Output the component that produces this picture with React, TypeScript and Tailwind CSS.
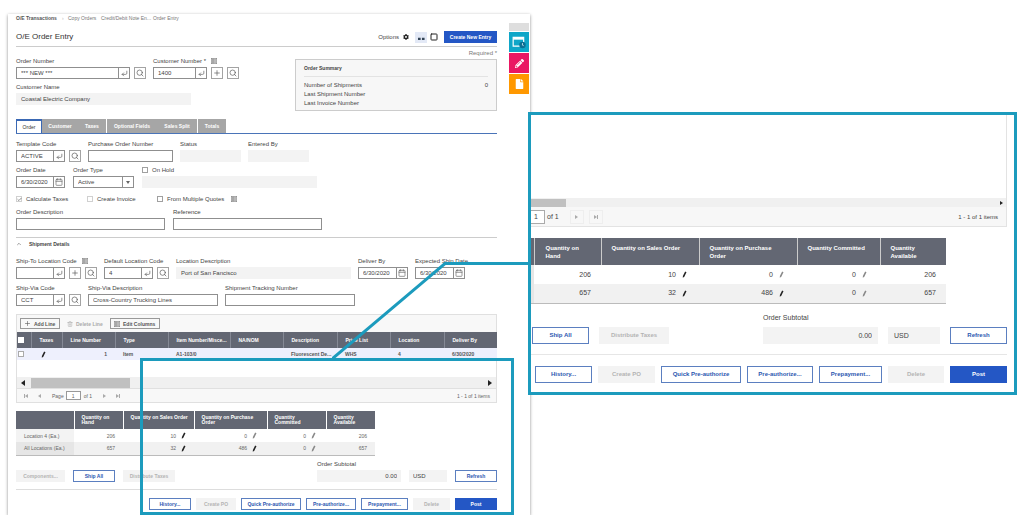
import React, { useId } from "react";
import clsx from "clsx";
import {
  Calendar,
  Check,
  ChevronUp,
  CornerDownLeft,
  Plus,
  Search,
  Square,
  Trash2,
} from "lucide-react";
import { FaCog, FaPencilAlt, FaFile } from "react-icons/fa";

const ListIcon = () => (
  <svg viewBox="0 0 12 12" className="w-[6px] h-[6px] shrink-0">
    <rect x="0.5" y="0.5" width="11" height="11" fill="#ddd" stroke="#777" />
    <path d="M2 3.5h8M2 6h8M2 8.5h8M4 1v10" stroke="#777" fill="none" />
  </svg>
);

const EditIcon = ({ faded }: { faded?: boolean }) => (
  <svg viewBox="0 0 10 14" className="w-[5px] h-[7px] shrink-0">
    <path
      d="M6.2 1.2 9 2.6 4.6 11.4 1.6 13.6 1.8 10Z"
      fill={faded ? "#888" : "#222"}
    />
  </svg>
);

const PagerIcon = ({ end, back }: { end?: boolean; back?: boolean }) => (
  <svg viewBox="0 0 6 4" className={clsx("w-[6px] h-[4px]", back && "rotate-180")}>
    <path d="M1 0v4l3-2z" fill="#aaa" />
    {end && <path d="M4.500 0v4" stroke="#aaa" />}
  </svg>
);

const IconButton = ({ label, children }: { label: string; children: React.ReactNode }) => (
  <button
    type="button"
    aria-label={label}
    className="flex items-center justify-center w-[12px] h-[12px] shrink-0 border border-[#a3a3a3] bg-white text-[#555]">
    {children}
  </button>
);

const SearchButton = () => (
  <IconButton label="Search">
    <Search className="w-[8px] h-[8px]" strokeWidth={2} />
  </IconButton>
);

const AddButton = () => (
  <IconButton label="Add">
    <Plus className="w-[8px] h-[8px]" strokeWidth={2} />
  </IconButton>
);

type FieldProps = {
  label: string;
  value?: string;
  width: string;
  disabled?: boolean;
  list?: boolean;
  addon?: "enter" | "date";
  children?: React.ReactNode;
};

const Field = ({ label, value = "", width, disabled, list, addon, children }: FieldProps) => {
  const id = useId();
  return (
    <div className="flex flex-col gap-[2px] shrink-0">
      <div className="flex items-center gap-[5px] h-[8px]">
        <label htmlFor={id} className="whitespace-nowrap">
          {label}
        </label>
        {list && <ListIcon />}
      </div>
      <div className="flex gap-[4px]">
        <div
          className={clsx(
            "flex h-[12px] border",
            width,
            disabled ? "border-[#f3f3f3] bg-[#f3f3f3]" : "border-[#8f8f8f] bg-white"
          )}>
          <input
            id={id}
            type="text"
            defaultValue={value}
            disabled={disabled}
            className="flex-1 min-w-0 h-[10px] pl-[4px] leading-[10px] bg-transparent outline-none"
          />
          {addon && (
            <button
              type="button"
              aria-label={addon === "enter" ? "Go" : "Pick a date"}
              className="flex items-center justify-center w-[11px] shrink-0 border-l border-[#8f8f8f] text-[#666]">
              {addon === "enter" ? (
                <CornerDownLeft className="w-[7px] h-[7px]" strokeWidth={2.5} />
              ) : (
                <Calendar className="w-[8px] h-[8px]" strokeWidth={2} />
              )}
            </button>
          )}
        </div>
        {children}
      </div>
    </div>
  );
};

const Tick = ({ label, checked, muted }: { label: string; checked?: boolean; muted?: boolean }) => (
  <label className="flex items-center gap-[4px] h-[8px] whitespace-nowrap">
    <span className="grid place-items-center">
      <input
        type="checkbox"
        defaultChecked={checked}
        disabled={muted}
        className={clsx(
          "col-start-1 row-start-1 appearance-none w-[6px] h-[6px] border",
          muted ? "border-[#d0d0d0]" : "border-[#a0a0a0]"
        )}
      />
      {checked && (
        <Check className="col-start-1 row-start-1 w-[5px] h-[5px] text-[#777]" strokeWidth={4} />
      )}
    </span>
    {label}
  </label>
);

type ActionProps = {
  children: React.ReactNode;
  kind?: "outline" | "solid" | "off";
  className: string;
};

const Action = ({ children, kind = "outline", className }: ActionProps) => (
  <button
    type="button"
    disabled={kind === "off"}
    className={clsx(
      "flex items-center justify-center shrink-0 border font-bold whitespace-nowrap",
      kind === "outline" && "border-[#5b7fc0] bg-white text-[#2c58b0]",
      kind === "solid" && "border-[#2457c5] bg-[#2457c5] text-white",
      kind === "off" && "border-[#f3f3f3] bg-[#f3f3f3] text-[#b4b4b4]",
      className
    )}>
    {children}
  </button>
);

const GRID_COLUMNS = [
  { title: "Taxes", width: "w-[31px]" },
  { title: "Line Number", width: "w-[53px]" },
  { title: "Type", width: "w-[53px]" },
  { title: "Item Number/Misce...", width: "w-[62px]" },
  { title: "NA/NOM", width: "w-[53px]" },
  { title: "Description", width: "w-[54px]" },
  { title: "Price List", width: "w-[53px]" },
  { title: "Location", width: "w-[54px]" },
  { title: "Deliver By", width: "w-[53px]" },
];

const QUANTITIES = [
  { name: "Location 4 (Ea.)", hand: "206", sales: "10", purchase: "0", committed: "0", available: "206" },
  { name: "All Locations (Ea.)", hand: "657", sales: "32", purchase: "486", committed: "0", available: "657" },
];

const pagerButton = "flex items-center justify-center w-[13px] h-[10px]";

const LineGrid = () => (
  <div className="mt-[8px] border border-[#e0e0e0] bg-white text-[5px]">
    <div className="flex items-center gap-[7px] h-[17px] px-[3px] bg-[#f8f8f8] font-bold text-[#555]">
      <button type="button" className="flex items-center gap-[3px] w-[40px] h-[11px] pl-[3px] border border-[#999] whitespace-nowrap">
        <Plus className="w-[7px] h-[7px] shrink-0" />
        Add Line
      </button>
      <button type="button" disabled className="flex items-center gap-[3px] w-[36px] h-[11px] text-[#aaa] whitespace-nowrap">
        <Trash2 className="w-[6px] h-[6px] shrink-0" />
        Delete Line
      </button>
      <button type="button" className="flex items-center gap-[3px] w-[50px] h-[11px] pl-[3px] border border-[#999] whitespace-nowrap">
        <ListIcon />
        Edit Columns
      </button>
    </div>
    <table className="w-full table-fixed text-left">
      <thead>
        <tr className="h-[16px] bg-[#636773] text-white">
          <th className="w-[14px] pl-[1px]">
            <input type="checkbox" aria-label="Select all" className="block appearance-none w-[6px] h-[6px] bg-white" />
          </th>
          {GRID_COLUMNS.map(({ title, width }) => (
            <th key={title} className={clsx("pl-[8px] border-l border-[#858995] font-bold whitespace-nowrap", width)}>
              {title}
            </th>
          ))}
        </tr>
      </thead>
      <tbody>
        <tr className="h-[12px] bg-[#eef0fd] font-bold text-[#555]">
          <td className="pl-[1px]">
            <input type="checkbox" aria-label="Select line" className="block appearance-none w-[6px] h-[6px] border border-[#aaa] bg-white" />
          </td>
          <td className="pl-[10px]"><EditIcon /></td>
          <td className="pr-[8px] text-right">1</td>
          <td className="pl-[8px]">Item</td>
          <td className="pl-[8px]">A1-103/0</td>
          <td />
          <td className="pl-[8px] whitespace-nowrap">Fluorescent De...</td>
          <td className="pl-[8px]">WHS</td>
          <td className="pl-[8px]">4</td>
          <td className="pl-[8px]">6/30/2020</td>
        </tr>
      </tbody>
    </table>
    <div className="flex items-center h-[11px] mt-[17px] px-[4px] bg-[#f0f0f0]">
      <svg viewBox="0 0 4 6" className="w-[4px] h-[6px]"><path d="M4 0v6L0 3z" fill="#222" /></svg>
      <div className="w-[99px] h-[10px] ml-[6px] bg-[#c0c0c0]" />
      <svg viewBox="0 0 4 6" className="w-[4px] h-[6px] ml-auto"><path d="M0 0v6l4-3z" fill="#222" /></svg>
    </div>
    <div className="flex items-center h-[14px] pl-[2px] pr-[6px] border-t border-[#e0e0e0] bg-[#f8f8f8] text-[#666]">
      <button type="button" aria-label="First page" className={pagerButton}><PagerIcon back end /></button>
      <button type="button" aria-label="Previous page" className={pagerButton}><PagerIcon back /></button>
      <label className="flex items-center gap-[2px] ml-[7px]">
        Page
        <input type="text" defaultValue="1" className="w-[15px] h-[9px] border border-[#999] bg-white text-center outline-none" />
      </label>
      <span className="ml-[3px] mr-[6px]">of 1</span>
      <button type="button" aria-label="Next page" className={pagerButton}><PagerIcon /></button>
      <button type="button" aria-label="Last page" className={pagerButton}><PagerIcon end /></button>
      <span className="ml-auto">1 - 1 of 1 items</span>
    </div>
  </div>
);

const Quantity = ({ value, faded, big }: { value: string; faded?: boolean; big?: boolean }) => (
  <div className={clsx("flex items-center justify-end", big ? "gap-[6px]" : "gap-[5px]")}>
    {value}
    <EditIcon faded={faded} />
  </div>
);

const QuantityTable = () => (
  <table className="table-fixed w-[359px] mt-[8px] border-b border-[#bbb] text-[5px] text-[#666]">
    <thead>
      <tr className="h-[18px] bg-[#636773] text-white text-left align-middle leading-[5px]">
        <th className="w-[58px]" />
        <th className="w-[49px] px-[7px] border-l border-white">Quantity on Hand</th>
        <th className="w-[71px] pl-[7px] border-l border-white align-top pt-[4px] whitespace-nowrap">Quantity on Sales Order</th>
        <th className="w-[73px] px-[7px] border-l border-white">Quantity on Purchase Order</th>
        <th className="w-[59px] px-[7px] border-l border-white">Quantity Committed</th>
        <th className="w-[49px] px-[7px] border-l border-white">Quantity Available</th>
      </tr>
    </thead>
    <tbody>
      {QUANTITIES.map((row, i) => (
        <tr key={row.name} className={clsx("h-[13px] text-right", i === 1 && "bg-[#f1f1f1]")}>
          <td className={clsx("pl-[8px] text-left whitespace-nowrap", i === 1 ? "bg-[#e6e6e6]" : "bg-[#f3f3f3]")}>{row.name}</td>
          <td className="pr-[8px]">{row.hand}</td>
          <td className="pr-[8px]"><Quantity value={row.sales} /></td>
          <td className="pr-[10px]"><Quantity value={row.purchase} faded={i === 0} /></td>
          <td className="pr-[10px]"><Quantity value={row.committed} faded /></td>
          <td className="pr-[8px]">{row.available}</td>
        </tr>
      ))}
    </tbody>
  </table>
);

const tab = "h-[14px] text-center border-r border-white";

const OrderEntry = () => (
  <main className="relative min-w-0 pl-[8px] pr-[33px] pb-[5px] bg-white text-[6px] leading-[8px] text-[#444] shadow-[0_1px_3px_rgba(0,0,0,0.45)]">
    <nav className="flex h-[8px] text-[5px] text-[#777] whitespace-nowrap">
      <a href="#" className="w-[46px] font-bold text-[#555]">O/E Transactions</a>
      <span className="w-[6px] text-[#bbb]">›</span>
      <a href="#" className="w-[33px]">Copy Orders</a>
      <a href="#" className="w-[52px]">Credit/Debit Note En...</a>
      <a href="#">Order Entry</a>
    </nav>

    <header className="flex items-center pt-[9px] pb-[3px] border-b border-[#ccc]">
      <h1 className="text-[8px] leading-[12px] text-[#333]">O/E Order Entry</h1>
      <button type="button" className="flex items-center gap-[4px] ml-auto">
        Options
        <FaCog className="w-[6px] h-[6px] text-[#222]" />
      </button>
      <button type="button" aria-label="Compact view" className="flex items-end justify-center w-[12px] h-[11px] pb-[2px] ml-[6px] bg-[#e3e9f6]">
        <svg viewBox="0 0 8 4" className="w-[7px] h-[4px]">
          <path d="M0 .5h3v2.500H0zM4.500 .5h3v2.500h-3z" fill="#345" />
        </svg>
      </button>
      <button type="button" aria-label="Full view" className="mx-[3px]">
        <Square className="w-[8px] h-[8px] text-[#222]" strokeWidth={3} />
      </button>
      <Action kind="solid" className="w-[53px] h-[12px] ml-[3px] text-[5px]">Create New Entry</Action>
    </header>

    <div className="flex justify-between">
      <div className="flex flex-col gap-[4px] pt-[10px]">
        <div className="flex gap-[7px]">
          <Field label="Order Number" value="*** NEW ***" width="w-[114px]" addon="enter">
            <SearchButton />
          </Field>
          <Field label="Customer Number *" value="1400" width="w-[54px]" addon="enter" list>
            <AddButton />
            <SearchButton />
          </Field>
        </div>
        <Field label="Customer Name" value="Coastal Electric Company" width="w-[175px]" disabled />
      </div>
      <div className="w-[202px] pt-[2px]">
        <p className="text-right text-[#777]">Required *</p>
        <section className="mt-[2px] px-[8px] pt-[4px] pb-[2px] border border-[#ccc] bg-[#f7f7f7]">
          <h2 className="pb-[4px] mb-[4px] border-b border-[#e3e3e3] font-bold text-[5px]">Order Summary</h2>
          <dl className="leading-[9px]">
            <div className="flex justify-between">
              <dt>Number of Shipments</dt>
              <dd>0</dd>
            </div>
            <dt>Last Shipment Number</dt>
            <dt>Last Invoice Number</dt>
          </dl>
        </section>
      </div>
    </div>

    <div role="tablist" className="flex mt-[8px] border-b border-[#4a74b8] text-[5px] font-bold text-white">
      <button role="tab" aria-selected="true" className="w-[26px] h-[14px] border border-b-0 border-t-2 border-[#3a68b4] bg-white font-normal text-[#333]">Order</button>
      <div className="flex bg-[#a6a6a6]">
        <button role="tab" className="w-[36px] h-[14px]">Customer</button>
        <button role="tab" className={clsx(tab, "w-[29px]")}>Taxes</button>
        <button role="tab" className="w-[50px] h-[14px]">Optional Fields</button>
        <button role="tab" className={clsx(tab, "w-[41px]")}>Sales Split</button>
        <button role="tab" className="w-[28px] h-[14px]">Totals</button>
      </div>
    </div>

    <div className="flex gap-[7px] mt-[6px]">
      <Field label="Template Code" value="ACTIVE" width="w-[49px]" addon="enter">
        <SearchButton />
      </Field>
      <Field label="Purchase Order Number" width="w-[85px]" />
      <Field label="Status" width="w-[61px]" disabled />
      <Field label="Entered By" width="w-[61px]" disabled />
    </div>

    <div className="flex gap-[8px] mt-[4px]">
      <Field label="Order Date" value="6/30/2020" width="w-[49px]" addon="date" />
      <div className="flex flex-col gap-[2px]">
        <label htmlFor="order-type" className="h-[8px]">Order Type</label>
        <div className="flex w-[61px] h-[12px] border border-[#8f8f8f]">
          <select id="order-type" defaultValue="Active" className="flex-1 min-w-0 h-[10px] pl-[4px] leading-[10px] appearance-none bg-transparent outline-none">
            <option>Active</option>
            <option>Future</option>
            <option>Quote</option>
          </select>
          <span className="flex items-center justify-center w-[11px] border-l border-[#8f8f8f]">
            <svg viewBox="0 0 4 3" className="w-[4px] h-[3px]"><path d="M0 0h4L2 3z" fill="#666" /></svg>
          </span>
        </div>
      </div>
      <div className="flex flex-col gap-[2px]">
        <Tick label="On Hold" />
        <input type="text" aria-label="Hold reason" disabled className="w-[175px] h-[12px] bg-[#f3f3f3]" />
      </div>
    </div>

    <div className="flex items-center mt-[7px]">
      <div className="w-[71px]"><Tick label="Calculate Taxes" checked muted /></div>
      <div className="w-[70px]"><Tick label="Create Invoice" muted /></div>
      <div className="flex items-center gap-[7px]">
        <Tick label="From Multiple Quotes" />
        <ListIcon />
      </div>
    </div>

    <div className="flex gap-[8px] mt-[5px]">
      <Field label="Order Description" width="w-[149px]" />
      <Field label="Reference" width="w-[149px]" />
    </div>

    <h2 className="flex items-center gap-[7px] mt-[7px] pt-[2px] border-t border-[#ccc] text-[5px] font-bold">
      <ChevronUp className="w-[6px] h-[6px]" strokeWidth={2} />
      Shipment Details
    </h2>

    <div className="flex gap-[7px] mt-[9px]">
      <Field label="Ship-To Location Code" width="w-[49px]" addon="enter" list>
        <AddButton />
        <SearchButton />
      </Field>
      <Field label="Default Location Code" value="4" width="w-[49px]" addon="enter">
        <SearchButton />
      </Field>
      <Field label="Location Description" value="Port of San Fancisco" width="w-[175px]" disabled />
      <Field label="Deliver By" value="6/30/2020" width="w-[50px]" addon="date" />
      <Field label="Expected Ship Date" value="6/30/2020" width="w-[50px]" addon="date" />
    </div>

    <div className="flex gap-[7px] mt-[5px]">
      <Field label="Ship-Via Code" value="CCT" width="w-[49px]" addon="enter">
        <SearchButton />
      </Field>
      <Field label="Ship-Via Description" value="Cross-Country Trucking Lines" width="w-[130px]" />
      <Field label="Shipment Tracking Number" width="w-[130px]" />
    </div>

    <LineGrid />
    <QuantityTable />

    <div className="flex items-end gap-[8px] mt-[4px] text-[5px]">
      <Action kind="off" className="w-[49px] h-[12px]">Components...</Action>
      <Action className="w-[42px] h-[12px]">Ship All</Action>
      <Action kind="off" className="w-[52px] h-[12px]">Distribute Taxes</Action>
      <div className="flex flex-col gap-[2px] ml-auto text-[6px]">
        <label htmlFor="subtotal">Order Subtotal</label>
        <input id="subtotal" type="text" readOnly value="0.00" className="w-[84px] h-[12px] pr-[4px] bg-[#f3f3f3] text-right" />
      </div>
      <input type="text" aria-label="Currency" readOnly value="USD" className="w-[38px] h-[12px] pl-[4px] bg-[#f3f3f3] text-[6px]" />
      <Action className="w-[42px] h-[12px]">Refresh</Action>
    </div>

    <footer className="flex justify-end gap-[5px] mt-[7px] pt-[8px] border-t border-[#ddd] text-[5px]">
      <Action className="w-[42px] h-[12px]">History...</Action>
      <Action kind="off" className="w-[40px] h-[12px]">Create PO</Action>
      <Action className="w-[60px] h-[12px]">Quick Pre-authorize</Action>
      <Action className="w-[50px] h-[12px]">Pre-authorize...</Action>
      <Action className="w-[47px] h-[12px]">Prepayment...</Action>
      <Action kind="off" className="w-[37px] h-[12px]">Delete</Action>
      <Action className="w-[42px] h-[12px]" kind="solid">Post</Action>
    </footer>

    <aside className="absolute right-[1px] top-[9px] flex flex-col gap-[1px] w-[20px] text-white">
      <div className="h-[8px] bg-[#dedede]" />
      <button type="button" aria-label="Windows" className="flex items-center justify-center h-[20px] bg-[#0fa6c8]">
        <svg viewBox="0 0 24 24" className="w-[14px] h-[14px]" fill="none">
          <path d="M2 4h18v15H2z" stroke="#fff" strokeWidth="2" />
          <path d="M2 4h18v4H2z" fill="#fff" />
          <circle cx="18" cy="17" r="5.500" fill="#0b6f94" />
          <path d="M18 14v3l2 2" stroke="#cfeaf2" strokeWidth="1.500" />
        </svg>
      </button>
      <button type="button" aria-label="Edit" className="flex items-center justify-center h-[20px] bg-[#ea1763]">
        <FaPencilAlt className="w-[9px] h-[9px]" />
      </button>
      <button type="button" aria-label="Notes" className="flex items-center justify-center h-[20px] bg-[#ff9800]">
        <FaFile className="w-[9px] h-[10px]" />
      </button>
    </aside>

    {/* highlighted region and its leader to the enlarged view */}
    <div className="absolute left-[132px] right-[16px] top-[344px] bottom-0 border-3 border-[#1c9bbd] pointer-events-none" />
    <svg viewBox="0 0 196 98" className="absolute left-[324px] top-[248px] w-[196px] h-[98px] pointer-events-none">
      <path d="M0 97 113 1.500H196" stroke="#1c9bbd" strokeWidth="3" fill="none" />
    </svg>
  </main>
);

const Enlarged = () => (
  <section className="relative min-w-0 mt-[98px] -ml-[2px] pr-[7px] pb-[9px] border-3 border-[#1c9bbd] bg-white text-[7px] leading-[10px] text-[#444]">
    <div className="border-r border-b border-[#e3e3e3]">
      <div className="h-[83px]" />
      <div className="flex items-center justify-between h-[9px] pr-[3px] bg-[#f0f0f0]">
        <div className="w-[35px] h-[8px] bg-[#c0c0c0]" />
        <svg viewBox="0 0 3 4" className="w-[3px] h-[4px]"><path d="M0 0v4l3-2z" fill="#222" /></svg>
      </div>
      <div className="flex items-center h-[19px] pr-[8px] bg-[#f7f7f7]">
        <input type="text" aria-label="Page" defaultValue="1" className="w-[14px] h-[14px] pl-[3px] border border-l-0 border-[#aaa] bg-white outline-none" />
        <span className="ml-[2px] mr-[11px]">of 1</span>
        <button type="button" aria-label="Next page" className="flex items-center justify-center w-[14px] h-[14px] mr-[5px] border border-[#eee]"><PagerIcon /></button>
        <button type="button" aria-label="Last page" className="flex items-center justify-center w-[14px] h-[14px] border border-[#eee]"><PagerIcon end /></button>
        <span className="ml-auto text-[6px]">1 - 1 of 1 items</span>
      </div>
    </div>

    <table className="table-fixed w-[415px] mt-[11px] border-b border-[#bbb]">
      <thead>
        <tr className="h-[27px] bg-[#636773] text-white text-left text-[6px] leading-[8px] align-top">
          <th className="w-[3px] p-0" />
          <th className="w-[67px] px-[11px] pt-[6px] border-l border-[#ccc]">Quantity on Hand</th>
          <th className="w-[98px] pl-[10px] pt-[6px] border-l border-[#ccc] whitespace-nowrap">Quantity on Sales Order</th>
          <th className="w-[98px] px-[10px] pt-[6px] border-l border-[#ccc]">Quantity on Purchase Order</th>
          <th className="w-[83px] pl-[10px] pt-[6px] border-l border-[#ccc] whitespace-nowrap">Quantity Committed</th>
          <th className="w-[66px] px-[10px] pt-[6px] border-l border-[#ccc]">Quantity Available</th>
        </tr>
      </thead>
      <tbody>
        {QUANTITIES.map((row, i) => (
          <tr key={row.name} className={clsx("h-[19px] text-right", i === 1 && "bg-[#f1f1f1]")}>
            <td className="p-0 bg-[#e6e6e6]" />
            <td className="pr-[10px]">{row.hand}</td>
            <td className="pr-[12px]"><Quantity value={row.sales} big /></td>
            <td className="pr-[13px]"><Quantity value={row.purchase} faded={i === 0} big /></td>
            <td className="pr-[13px]"><Quantity value={row.committed} faded big /></td>
            <td className="pr-[10px]">{row.available}</td>
          </tr>
        ))}
      </tbody>
    </table>

    <div className="flex items-end gap-[10px] mt-[9px] pl-[1px]">
      <Action className="w-[57px] h-[17px] text-[6px]">Ship All</Action>
      <Action kind="off" className="w-[70px] h-[17px] text-[6px]">Distribute Taxes</Action>
      <div className="flex flex-col gap-[4px] ml-auto">
        <label htmlFor="subtotal-large">Order Subtotal</label>
        <input id="subtotal-large" type="text" readOnly value="0.00" className="w-[115px] h-[17px] pr-[6px] bg-[#f3f3f3] text-right" />
      </div>
      <input type="text" aria-label="Currency" readOnly value="USD" className="w-[52px] h-[17px] pl-[6px] bg-[#f3f3f3]" />
      <Action className="w-[57px] h-[17px] text-[6px]">Refresh</Action>
    </div>

    <footer className="flex justify-end gap-[6px] mt-[10px] pt-[11px] border-t border-[#e6e6e6] text-[6px]">
      <Action className="w-[57px] h-[17px]">History...</Action>
      <Action kind="off" className="w-[57px] h-[17px]">Create PO</Action>
      <Action className="w-[80px] h-[17px]">Quick Pre-authorize</Action>
      <Action className="w-[66px] h-[17px]">Pre-authorize...</Action>
      <Action className="w-[63px] h-[17px]">Prepayment...</Action>
      <Action kind="off" className="w-[56px] h-[17px]">Delete</Action>
      <Action className="w-[57px] h-[17px]" kind="solid">Post</Action>
    </footer>
  </section>
);

const App = () => {
  return (
    <div className="grid grid-cols-[522fr_487fr] items-start pt-[14px] pl-[8px] pr-[7px] bg-white font-['Liberation_Sans',Arial,sans-serif]">
      <OrderEntry />
      <Enlarged />
    </div>
  );
};

export default App;
